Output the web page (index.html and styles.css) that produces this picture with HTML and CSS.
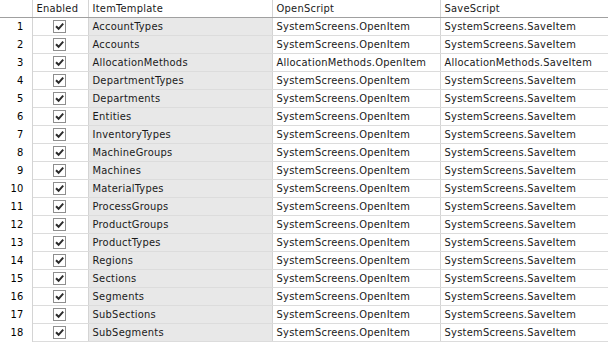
FILE: index.html
```html
<!DOCTYPE html>
<html>
<head>
<meta charset="utf-8">
<link rel="stylesheet" href="styles.css">
</head>
<body>
<table class="grid">
  <colgroup>
    <col class="c-num"><col class="c-en"><col class="c-tpl"><col class="c-open"><col class="c-save">
  </colgroup>
  <thead>
    <tr><th class="num"></th><th>Enabled</th><th>ItemTemplate</th><th>OpenScript</th><th class="last">SaveScript</th></tr>
  </thead>
  <tbody id="rows"></tbody>
</table>
<script>
var items = [
 ["AccountTypes","SystemScreens"],["Accounts","SystemScreens"],["AllocationMethods","AllocationMethods"],
 ["DepartmentTypes","SystemScreens"],["Departments","SystemScreens"],["Entities","SystemScreens"],
 ["InventoryTypes","SystemScreens"],["MachineGroups","SystemScreens"],["Machines","SystemScreens"],
 ["MaterialTypes","SystemScreens"],["ProcessGroups","SystemScreens"],["ProductGroups","SystemScreens"],
 ["ProductTypes","SystemScreens"],["Regions","SystemScreens"],["Sections","SystemScreens"],
 ["Segments","SystemScreens"],["SubSections","SystemScreens"],["SubSegments","SystemScreens"]
];
var check = '<span class="cb"><svg width="11" height="11" viewBox="0 0 11 11"><path d="M2 5.2 L4.6 7.8 L9.2 2.6" fill="none" stroke="#2b2b2b" stroke-width="2"/></svg></span>';
var html = "";
items.forEach(function(it, i){
  html += '<tr><td class="num">' + (i+1) + '</td><td class="en">' + check + '</td><td class="tpl">' + it[0] +
    '</td><td>' + it[1] + '.OpenItem</td><td class="last">' + it[1] + '.SaveItem</td></tr>';
});
document.getElementById("rows").innerHTML = html;
</script>
</body>
</html>
```

FILE: styles.css
```css
html, body {
  margin: 0;
  padding: 0;
  background: #fff;
}
.grid {
  border-collapse: collapse;
  table-layout: fixed;
  width: 608px;
  font-family: "DejaVu Sans Condensed", "DejaVu Sans", sans-serif;
  font-size: 11px;
  letter-spacing: 0.25px;
  color: #1a1a1a;
}
.c-num { width: 32px; }
.c-en { width: 56px; }
.c-tpl { width: 184px; }
.c-open { width: 168px; }
.c-save { width: 168px; }
.grid th, .grid td {
  padding: 1px 0 0 4px;
  height: 16px;
  line-height: 16px;
  text-align: left;
  font-weight: normal;
  white-space: nowrap;
  overflow: hidden;
  border-right: 1px solid #d4d4d4;
}
.grid th {
  border-bottom: 1px solid #a0a0a0;
}
.grid td {
  border-bottom: 1px solid #dcdcdc;
}
.grid td.num {
  border-bottom: none;
  text-align: right;
  padding: 1px 8px 0 0;
  color: #000;
}
.grid th.last, .grid td.last { border-right: none; }
.grid td.tpl { background: #e8e8e8; }
.grid td.en { padding: 0; text-align: center; }
.cb {
  display: inline-block;
  width: 11px;
  height: 11px;
  border: 1px solid #8e8e8e;
  background: #fff;
  vertical-align: middle;
  margin-top: -1px;
  margin-left: -1px;
}
.cb svg { display: block; }
```
